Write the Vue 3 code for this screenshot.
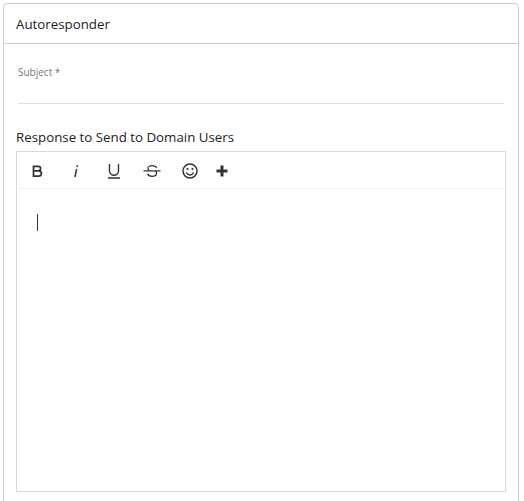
<script setup>
const label = "Response to Send to Domain Users"
</script>

<template>
  <main class="page">
    <section class="card">
      <header class="card-header">Autoresponder</header>
      <div class="card-body">
        <div class="field">
          <label class="field-label">Subject *</label>
        </div>
        <h2 class="editor-label">{{ label }}</h2>
        <div class="editor">
          <div class="toolbar">
            <button class="tool bold" title="Bold">
              <svg width="14" height="14" viewBox="0 0 14 14"><path d="M2.500 2.300h4.800a2.300 2.300 0 0 1 0 4.600H2.500zM2.500 6.900h5.300a2.600 2.600 0 0 1 0 5.200H2.500z" fill="none" stroke="#333" stroke-width="1.700"/></svg>
            </button>
            <button class="tool italic" title="Italic">
              <svg width="14" height="14" viewBox="0 0 14 14"><path d="M8.200 1.200v1.700M7.600 5 6 13" fill="none" stroke="#333" stroke-width="1.500"/></svg>
            </button>
            <button class="tool underline" title="Underline">
              <svg width="14" height="16" viewBox="0 0 14 16"><path d="M2.500 1v6.800a4.500 4.500 0 0 0 9 0V1M1 15h12" fill="none" stroke="#333" stroke-width="1.400"/></svg>
            </button>
            <button class="tool strike" title="Strikethrough">
              <svg width="18" height="14" viewBox="0 0 18 14"><path d="M13.500 4C13.100 2.500 11.500 1.700 9 1.700 6.700 1.700 5 2.800 5 4.300c0 1 .5 1.800 1.200 2.500M12.400 7c.7.700 1.100 1.500 1.100 2.500 0 1.600-1.900 2.800-4.500 2.800-2.400 0-4-1-4.500-2.500M.5 6.900h17" fill="none" stroke="#333" stroke-width="1.300"/></svg>
            </button>
            <button class="tool smile" title="Emoji">
              <svg width="16" height="16" viewBox="0 0 16 16"><circle cx="8" cy="8" r="7" fill="none" stroke="#333" stroke-width="1.500"/><circle cx="5.500" cy="6" r="1.100" fill="#333"/><circle cx="10.500" cy="6" r="1.100" fill="#333"/><path d="M4.300 9.500c.8 1.700 2.100 2.500 3.700 2.500s2.900-.8 3.700-2.500" fill="none" stroke="#333" stroke-width="1.300"/></svg>
            </button>
            <button class="tool plus" title="More">
              <svg width="12" height="12" viewBox="0 0 12 12"><path d="M6 .5v11M.5 6h11" fill="none" stroke="#333" stroke-width="3"/></svg>
            </button>
          </div>
          <div class="editor-area">
            <span class="caret"></span>
          </div>
        </div>
      </div>
    </section>
  </main>
</template>

<style scoped>
.page {
  height: 501px;
  padding: 3px 5px 0 3px;
  box-sizing: border-box;
  overflow: hidden;
  font-family: "Open Sans", "Noto Sans", sans-serif;
  color: #333;
}

.card {
  height: 520px;
  box-sizing: border-box;
  border: 1px solid #ccc;
  border-radius: 4px;
  background: #fff;
}

.card-header {
  height: 40px;
  box-sizing: border-box;
  padding-left: 12px;
  border-bottom: 1px solid #ccc;
  font-size: 13.300px;
  line-height: 40px;
  color: #222;
}

.card-body {
  padding: 0 12px;
}

.field {
  margin: 0 2px 0 2px;
  height: 60px;
  box-sizing: border-box;
  border-bottom: 1px solid #e0e0e0;
  padding-top: 20px;
}

.field-label {
  display: block;
  font-size: 10px;
  line-height: 16px;
  color: #777;
}

.editor-label {
  margin: 23px 0 4px;
  font-size: 13.300px;
  font-weight: 400;
  line-height: 20px;
  color: #222;
}

.editor {
  height: 341px;
  box-sizing: border-box;
  border: 1px solid #d9d9d9;
}

.toolbar {
  display: flex;
  align-items: center;
  height: 36px;
  margin: 0 2px;
  border-bottom: 1px solid #f0f0f0;
}

.tool {
  display: flex;
  align-items: center;
  justify-content: center;
  padding: 2px 0 0;
  border: none;
  background: none;
  width: 38px;
  height: 36px;
}

.tool.plus {
  width: 26px;
}

.editor-area {
  padding: 25px 20px;
}

.caret {
  display: block;
  width: 1px;
  height: 17px;
  background: #333;
}
</style>
